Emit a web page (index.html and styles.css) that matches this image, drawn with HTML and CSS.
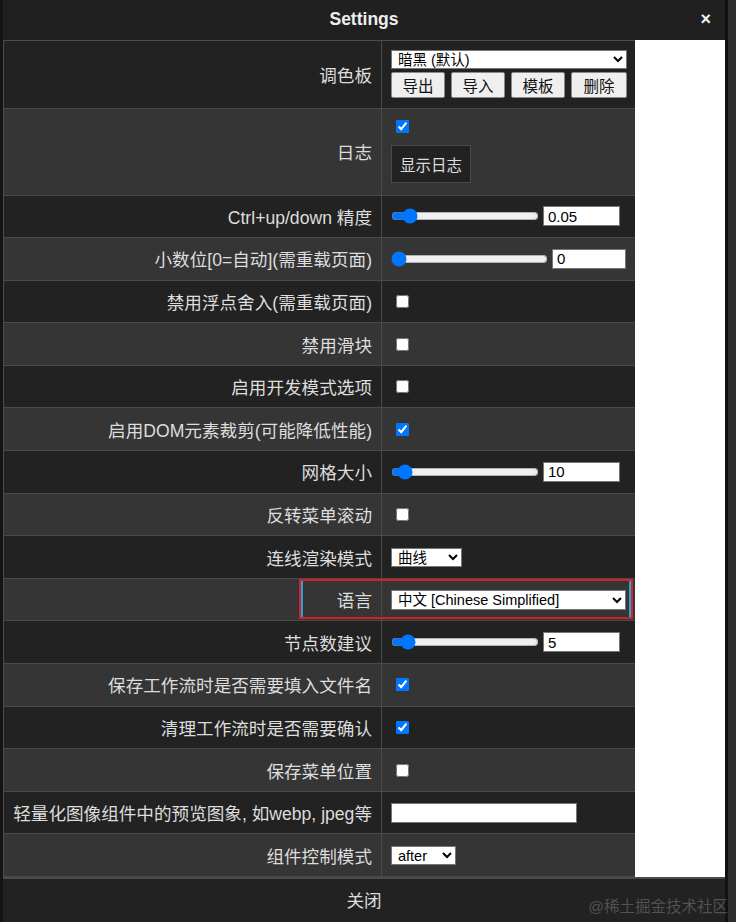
FILE: index.html
```html
<!DOCTYPE html>
<html lang="zh">
<head>
<meta charset="utf-8">
<title>Settings</title>
<link rel="stylesheet" href="styles.css">
</head>
<body>
<div class="page">
  <div class="dialog">
    <div class="header">
      <span class="title">Settings</span>
      <span class="close">×</span>
    </div>
    <div class="body">
      <div class="table">
        <div class="row dark h68">
          <div class="label">调色板</div>
          <div class="value col">
            <select class="sel sel-palette"><option>暗黑 (默认)</option></select>
            <div class="btns">
              <button class="btn">导出</button>
              <button class="btn">导入</button>
              <button class="btn">模板</button>
              <button class="btn wide">删除</button>
            </div>
          </div>
        </div>
        <div class="row light h87">
          <div class="label">日志</div>
          <div class="value col log">
            <input type="checkbox" class="cb" checked>
            <button class="dark-btn">显示日志</button>
          </div>
        </div>
        <div class="row dark">
          <div class="label">Ctrl+up/down 精度</div>
          <div class="value">
            <input type="range" class="range r148" min="0.01" max="0.5" step="0.01" value="0.05">
            <input type="text" class="num n78" value="0.05">
          </div>
        </div>
        <div class="row light">
          <div class="label">小数位[0=自动](需重载页面)</div>
          <div class="value">
            <input type="range" class="range r157" min="0" max="10" step="1" value="0">
            <input type="text" class="num n74" value="0">
          </div>
        </div>
        <div class="row dark">
          <div class="label">禁用浮点舍入(需重载页面)</div>
          <div class="value"><input type="checkbox" class="cb"></div>
        </div>
        <div class="row light">
          <div class="label">禁用滑块</div>
          <div class="value"><input type="checkbox" class="cb"></div>
        </div>
        <div class="row dark">
          <div class="label">启用开发模式选项</div>
          <div class="value"><input type="checkbox" class="cb"></div>
        </div>
        <div class="row light">
          <div class="label">启用DOM元素裁剪(可能降低性能)</div>
          <div class="value"><input type="checkbox" class="cb" checked></div>
        </div>
        <div class="row dark">
          <div class="label">网格大小</div>
          <div class="value">
            <input type="range" class="range r148" min="1" max="200" step="1" value="10">
            <input type="text" class="num n78" value="10">
          </div>
        </div>
        <div class="row light">
          <div class="label">反转菜单滚动</div>
          <div class="value"><input type="checkbox" class="cb"></div>
        </div>
        <div class="row dark">
          <div class="label">连线渲染模式</div>
          <div class="value">
            <select class="sel sel-link"><option>曲线</option></select>
          </div>
        </div>
        <div class="row light marked">
          <div class="label">语言</div>
          <div class="value">
            <select class="sel sel-lang"><option>中文 [Chinese Simplified]</option></select>
          </div>
          <div class="mark"></div>
        </div>
        <div class="row dark">
          <div class="label">节点数建议</div>
          <div class="value">
            <input type="range" class="range r148" min="1" max="60" step="1" value="5">
            <input type="text" class="num n78" value="5">
          </div>
        </div>
        <div class="row light">
          <div class="label">保存工作流时是否需要填入文件名</div>
          <div class="value"><input type="checkbox" class="cb" checked></div>
        </div>
        <div class="row dark">
          <div class="label">清理工作流时是否需要确认</div>
          <div class="value"><input type="checkbox" class="cb" checked></div>
        </div>
        <div class="row light">
          <div class="label">保存菜单位置</div>
          <div class="value"><input type="checkbox" class="cb"></div>
        </div>
        <div class="row dark">
          <div class="label">轻量化图像组件中的预览图象, 如webp, jpeg等</div>
          <div class="value"><input type="text" class="text-in"></div>
        </div>
        <div class="row light">
          <div class="label">组件控制模式</div>
          <div class="value">
            <select class="sel sel-after"><option>after</option></select>
          </div>
        </div>
      </div>
      <div class="filler"></div>
    </div>
    <div class="footer">
      <span class="close-text">关闭</span>
      <span class="watermark">@稀土掘金技术社区</span>
    </div>
  </div>
  <div class="backdrop"></div>
</div>
</body>
</html>
```
FILE: styles.css
```css
* { box-sizing: border-box; }
html, body { margin: 0; padding: 0; }
body {
  background: #2c2c2c;
  font-family: "Liberation Sans", "Noto Sans CJK SC", sans-serif;
  width: 736px;
  height: 922px;
  overflow: hidden;
}
.page {
  display: flex;
  height: 922px;
}
.dialog {
  width: 728px;
  height: 922px;
  background: #222;
  border-left: 3px solid #141414;
  border-right: 3px solid #111;
  display: flex;
  flex-direction: column;
}
.backdrop {
  flex: 1;
  background: #2e2e2e;
}
.header {
  height: 40px;
  background: #202020;
  display: flex;
  align-items: center;
  justify-content: center;
  position: relative;
}
.title {
  color: #eee;
  font-weight: bold;
  font-size: 17.5px;
  margin-top: -1px;
}
.close {
  position: absolute;
  right: 14px;
  top: 9px;
  color: #f0f0f0;
  font-weight: bold;
  font-size: 18px;
}
.body {
  display: flex;
  height: 837px;
}
.table {
  width: 632px;
  border-left: 1px solid #4c4c4c;
  border-top: 1px solid #4c4c4c;
  display: flex;
  flex-direction: column;
}
.filler {
  flex: 1;
  background: #fff;
}
.row {
  display: grid;
  grid-template-columns: 378px 253px;
  height: 42.6px;
  border-bottom: 1px solid #4a4a4a;
  position: relative;
}
.row.h68 { height: 67.5px; }
.row.h87 { height: 87px; }
.row.dark { background: #222; }
.row.light { background: #353535; }
.label {
  display: flex;
  align-items: center;
  justify-content: flex-end;
  padding-right: 9px;
  color: #ddd;
  font-size: 17.6px;
  white-space: nowrap;
  border-right: 1px solid #4a4a4a;
}
.value {
  display: flex;
  align-items: center;
  padding-left: 9px;
}
.value.col {
  flex-direction: column;
  align-items: flex-start;
  justify-content: center;
}
.btns {
  display: flex;
  gap: 6px;
  margin-top: 3px;
}
.btn {
  width: 54px;
  height: 26px;
  margin: 0;
  padding: 0;
  background: #efefef;
  border: 1px solid #8a8a8a;
  border-radius: 2px;
  font-family: "Liberation Sans", "Noto Sans CJK SC", sans-serif;
  font-size: 15.5px;
  color: #111;
}
.btn.wide { width: 56px; }
.log { gap: 12px; }
.cb {
  margin: 0 0 0 5px;
  width: 13px;
  height: 13px;
}
.dark-btn {
  width: 80px;
  height: 38px;
  margin: 0;
  padding: 0;
  background: #222;
  border: 1px solid #4a4a4a;
  color: #ddd;
  font-family: "Liberation Sans", "Noto Sans CJK SC", sans-serif;
  font-size: 15.5px;
}
.sel {
  height: 19px;
  margin: 0;
  padding: 0 0 0 2px;
  background: #fff;
  color: #000;
  border: 1px solid #767676;
  border-radius: 0;
  font-family: "Liberation Sans", "Noto Sans CJK SC", sans-serif;
  font-size: 14.5px;
}
.sel-palette { width: 236px; }
.sel-link { width: 71px; }
.sel-lang { width: 235px; height: 20px; }
.sel-after { width: 65px; }
.range {
  margin: 0;
  height: 16px;
  accent-color: #0075ff;
}
.r148 { width: 148px; }
.r157 { width: 157px; }
.num, .text-in {
  height: 20px;
  margin: 0 0 0 4px;
  padding: 0 4px;
  background: #fff;
  color: #000;
  border: 1px solid #767676;
  font-family: "Liberation Sans", "Noto Sans CJK SC", sans-serif;
  font-size: 15px;
}
.n78 { width: 77px; }
.n74 { width: 74px; }
.text-in { width: 186px; margin: 0; }
.mark {
  position: absolute;
  left: 295px;
  top: 0;
  width: 334px;
  height: 40px;
  border: 2px solid #d0212c;
  box-shadow: inset 2px 0 0 #2aa3d8, inset -2px 0 0 #2aa3d8;
  pointer-events: none;
}
.footer {
  flex: 1;
  background: #222;
  border-top: 2px solid #4a4a4a;
  display: flex;
  align-items: center;
  justify-content: center;
  position: relative;
}
.close-text {
  color: #ddd;
  font-size: 17.6px;
  margin-top: -2px;
}
.watermark {
  position: absolute;
  right: -3px;
  bottom: 6px;
  color: rgba(255, 255, 255, 0.22);
  font-size: 15.5px;
}
```
